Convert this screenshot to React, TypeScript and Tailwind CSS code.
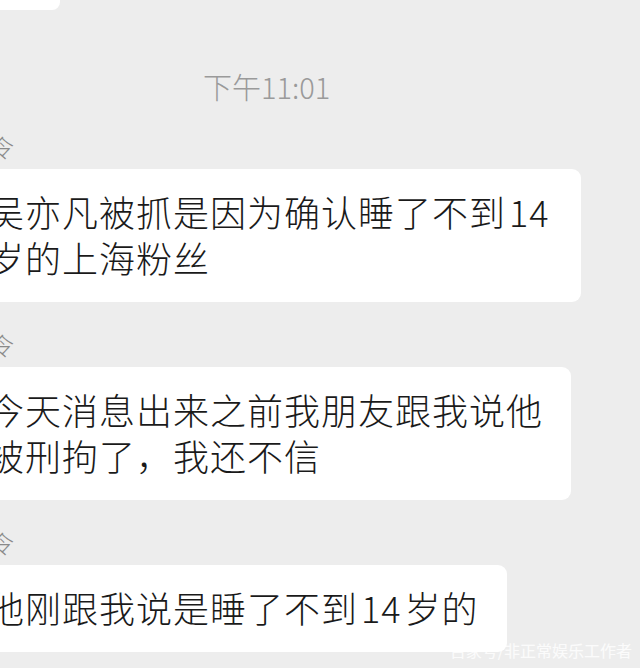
import React from "react";

interface Message {
  sender: string;
  lines: React.ReactNode[];
}

const Num = ({ children }: { children: string }) => <span className="mx-[3px]">{children}</span>;

const messages: Message[] = [
  {
    sender: "令",
    lines: [
      <>吴亦凡被抓是因为确认睡了不到<Num>14</Num></>,
      "岁的上海粉丝",
    ],
  },
  { sender: "令", lines: ["今天消息出来之前我朋友跟我说他", "被刑拘了，我还不信"] },
  { sender: "令", lines: [<>他刚跟我说是睡了不到<Num>14</Num>岁的</>] },
];

const font = { fontFamily: '"Noto Sans CJK SC", "Noto Sans", sans-serif' };

const App: React.FC = () => {
  return (
    <div className="relative h-[668px] w-[640px] overflow-hidden bg-[#ededed]" style={font}>
      {/* bottom of the previous bubble */}
      <div className="h-[10px] w-[60px] rounded-br-[8px] bg-white" />

      {/* time divider */}
      <div className="mt-[58px] pl-[203px] text-[29px] font-light leading-[36px] text-[#9a9a9a]">下午11:01</div>

      {/* chat */}
      <div className="flex flex-col">
        {messages.map((msg, idx) => (
          <div key={idx} className="flex flex-col items-start">
            <div className="-ml-[10px] mt-[29px] mb-[8px] text-[24px] font-light leading-[28px] text-[#8a8a8a]">
              {msg.sender}
            </div>
            <div className="-ml-[30px] w-fit rounded-[9px] bg-white pl-[18px] pr-[28px] pt-[19px] pb-[22px] text-[36px] font-light leading-[46px] tracking-[1px] text-[#1a1a1a] whitespace-nowrap">
              {msg.lines.map((line, i) => (
                <div key={i}>{line}</div>
              ))}
            </div>
          </div>
        ))}
      </div>

      {/* watermark */}
      <div className="absolute right-[8px] bottom-[8px] text-[16px] leading-[20px] text-white/80">
        百家号/非正常娱乐工作者
      </div>
    </div>
  );
};

export default App;
